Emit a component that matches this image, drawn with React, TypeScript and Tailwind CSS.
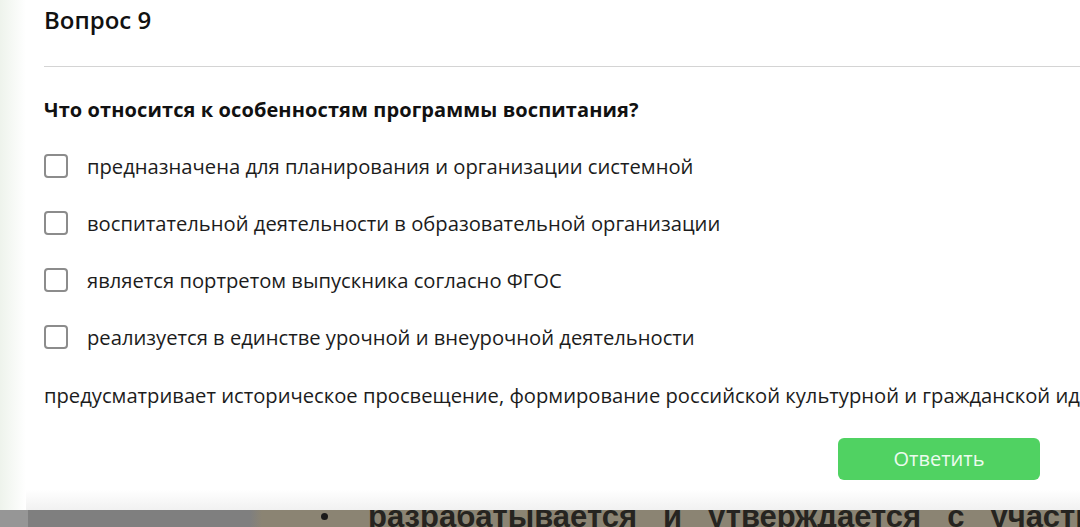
import React from "react";

const options = [
  "предназначена для планирования и организации системной",
  "воспитательной деятельности в образовательной организации",
  "является портретом выпускника согласно ФГОС",
  "реализуется в единстве урочной и внеурочной деятельности",
];

export default function App() {
  return (
    <div
      className="w-[1080px] h-[527px] overflow-hidden flex flex-col bg-white"
      style={{ fontFamily: '"Open Sans", "Noto Sans", sans-serif' }}
    >
      <div className="h-[510px] flex flex-row shrink-0">
        <div className="w-[26px] shrink-0 bg-gradient-to-r from-[#eef3ec] to-white" />
        <div className="flex-1 min-w-0 flex flex-col bg-gradient-to-b from-white from-[96%] to-[#f1f1f1] pl-[18px]">
          <div className="pt-[4px] h-[67px] shrink-0 border-b border-[#d4d4d4] text-[24px] font-semibold text-[#111] leading-[32px]">
            Вопрос 9
          </div>
          <div className="mt-[29px] text-[20px] font-bold text-[#111] leading-[28px] whitespace-nowrap tracking-[0.1px]">
            Что относится к особенностям программы воспитания?
          </div>
          <div className="mt-[30px] flex flex-col gap-[33px]">
            {options.map((o) => (
              <div key={o} className="flex flex-row items-center h-[24px]">
                <div className="w-[24px] h-[24px] rounded-[4px] border-2 border-[#8c8c8c] bg-white shrink-0" />
                <span className="ml-[19px] text-[20.2px] text-[#1c1c1c] whitespace-nowrap leading-[24px]">{o}</span>
              </div>
            ))}
          </div>
          <div className="mt-[34px] text-[20.2px] text-[#1c1c1c] whitespace-nowrap leading-[24px]">
            предусматривает историческое просвещение, формирование российской культурной и гражданской идентичности
          </div>
          <div className="mt-[31px] flex flex-row">
            <div className="ml-[794px] w-[202px] h-[42px] shrink-0 rounded-[6px] bg-[#50d262] flex items-center justify-center text-[20px] text-[#ecfbee]">
              Ответить
            </div>
          </div>
        </div>
      </div>
      <div className="h-[17px] flex flex-row shrink-0 overflow-hidden">
        <div className="w-[28px] shrink-0 bg-[#969696]" />
        <div className="w-[222px] shrink-0 bg-[#7f7f7f]" />
        <div className="w-[12px] shrink-0 bg-gradient-to-r from-[#7f7f7f] to-[#8b8473]" />
        <div
          className="flex-1 min-w-0 overflow-hidden bg-[#8b8473] flex flex-row items-start whitespace-nowrap text-[31px] font-bold text-[#262420] leading-[31px]"
          style={{ fontFamily: '"Liberation Sans", Arial, sans-serif' }}
        >
          <div className="ml-[59px] mt-[3px] w-[7px] h-[7px] rounded-full bg-[#1a1a1a] shrink-0" />
          <div className="ml-[40px] -mt-[9px] flex flex-row gap-[26px] shrink-0">
            <span>разрабатывается</span>
            <span>и</span>
            <span>утверждается</span>
            <span>с</span>
            <span>участием</span>
          </div>
        </div>
      </div>
    </div>
  );
}
